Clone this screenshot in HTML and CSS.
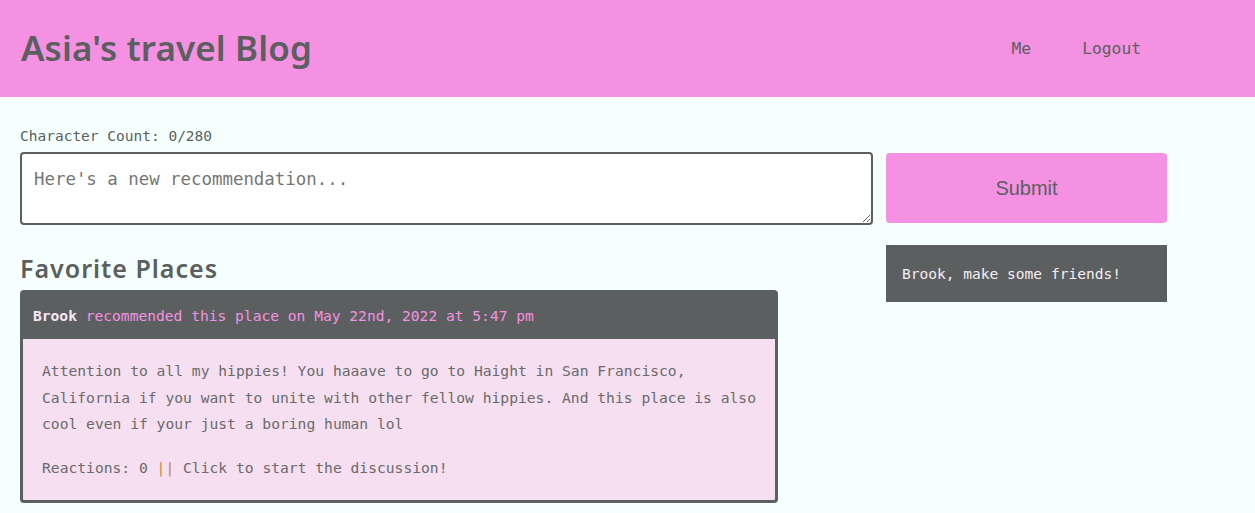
FILE: index.html
```html
<!DOCTYPE html>
<html>
<head>
<meta charset="utf-8">
<link rel="stylesheet" href="styles.css">
</head>
<body>
<header class="topbar">
  <h1 class="brand">Asia's travel Blog</h1>
  <nav class="nav">
    <a class="nav-link" href="#">Me</a>
    <a class="nav-link" href="#">Logout</a>
  </nav>
</header>
<main class="layout">
  <section class="main-col">
    <div class="char-count">Character Count: 0/280</div>
    <textarea class="rec-input" placeholder="Here's a new recommendation..."></textarea>
    <h2 class="section-title">Favorite Places</h2>
    <article class="card">
      <div class="card-head"><span class="author">Brook</span> recommended this place on May 22nd, 2022 at 5:47 pm</div>
      <div class="card-body">
        <p class="card-text">Attention to all my hippies! You haaave to go to Haight in San Francisco, California if you want to unite with other fellow hippies. And this place is also cool even if your just a boring human lol</p>
        <p class="card-meta">Reactions: 0 <span class="sep">||</span> Click to start the discussion!</p>
      </div>
    </article>
  </section>
  <aside class="side-col">
    <button class="submit-btn">Submit</button>
    <div class="friends-box">Brook, make some friends!</div>
  </aside>
</main>
</body>
</html>
```
FILE: styles.css
```css
* { box-sizing: border-box; }
body {
  margin: 0;
  background: #f5fffd;
  font-family: "DejaVu Sans Mono", monospace;
  color: #5b5f5f;
}
.topbar {
  height: 97px;
  background: #f591e3;
  display: flex;
  align-items: center;
  justify-content: space-between;
  padding: 0 114px 0 21px;
}
.brand {
  margin: 0 0 2px;
  font-family: "Noto Sans", sans-serif;
  font-weight: 600;
  font-size: 35px;
  letter-spacing: 0.1px;
  color: #5b5f5f;
}
.nav {
  display: flex;
  gap: 51px;
}
.nav-link {
  font-size: 16.3px;
  color: #5b5f5f;
  text-decoration: none;
}
.layout {
  display: grid;
  grid-template-columns: 853px 281px;
  column-gap: 13px;
  padding: 0 20px;
}
.char-count {
  margin-top: 30px;
  font-size: 14.5px;
  color: #5b5f5f;
  line-height: 18px;
}
.rec-input {
  display: block;
  width: 853px;
  height: 73px;
  margin-top: 7px;
  border: 2px solid #5b5f5f;
  border-radius: 4px;
  background: #fff;
  padding: 15px 12px;
  font-family: "DejaVu Sans Mono", monospace;
  font-size: 17.4px;
  color: #5b5f5f;
  resize: vertical;
}
.rec-input::placeholder { color: #767676; }
.section-title {
  margin: 28px 0 7px;
  font-family: "Noto Sans", sans-serif;
  font-weight: 600;
  font-size: 25px;
  letter-spacing: 1px;
  line-height: 30px;
  color: #5b5f5f;
}
.card {
  width: 758px;
  border: 3px solid #5b5f5f;
  border-radius: 4px;
  background: #f5dff0;
}
.card-head {
  background: #5b5f5f;
  color: #f591e3;
  font-size: 14.6px;
  padding: 13px 10px 14px 10px;
  line-height: 19px;
}
.author {
  font-weight: bold;
  color: #f7e6f3;
}
.card-body {
  padding: 19px 12px 19px 19px;
  color: #6b6b6b;
  font-size: 14.65px;
  line-height: 26.5px;
}
.card-text { margin: 0 0 17px; }
.card-meta { margin: 0; }
.sep { color: #c8873d; }
.side-col {
  display: flex;
  flex-direction: column;
  padding-top: 56px;
}
.submit-btn {
  height: 70px;
  border: none;
  border-radius: 4px;
  background: #f591e3;
  font-family: "Liberation Sans", Arial, sans-serif;
  font-size: 20px;
  color: #5b5f5f;
  cursor: pointer;
}
.friends-box {
  margin-top: 22px;
  height: 57px;
  background: #5b5f5f;
  color: #f7eef5;
  font-size: 14.55px;
  display: flex;
  align-items: center;
  padding: 0 16px;
}
```
